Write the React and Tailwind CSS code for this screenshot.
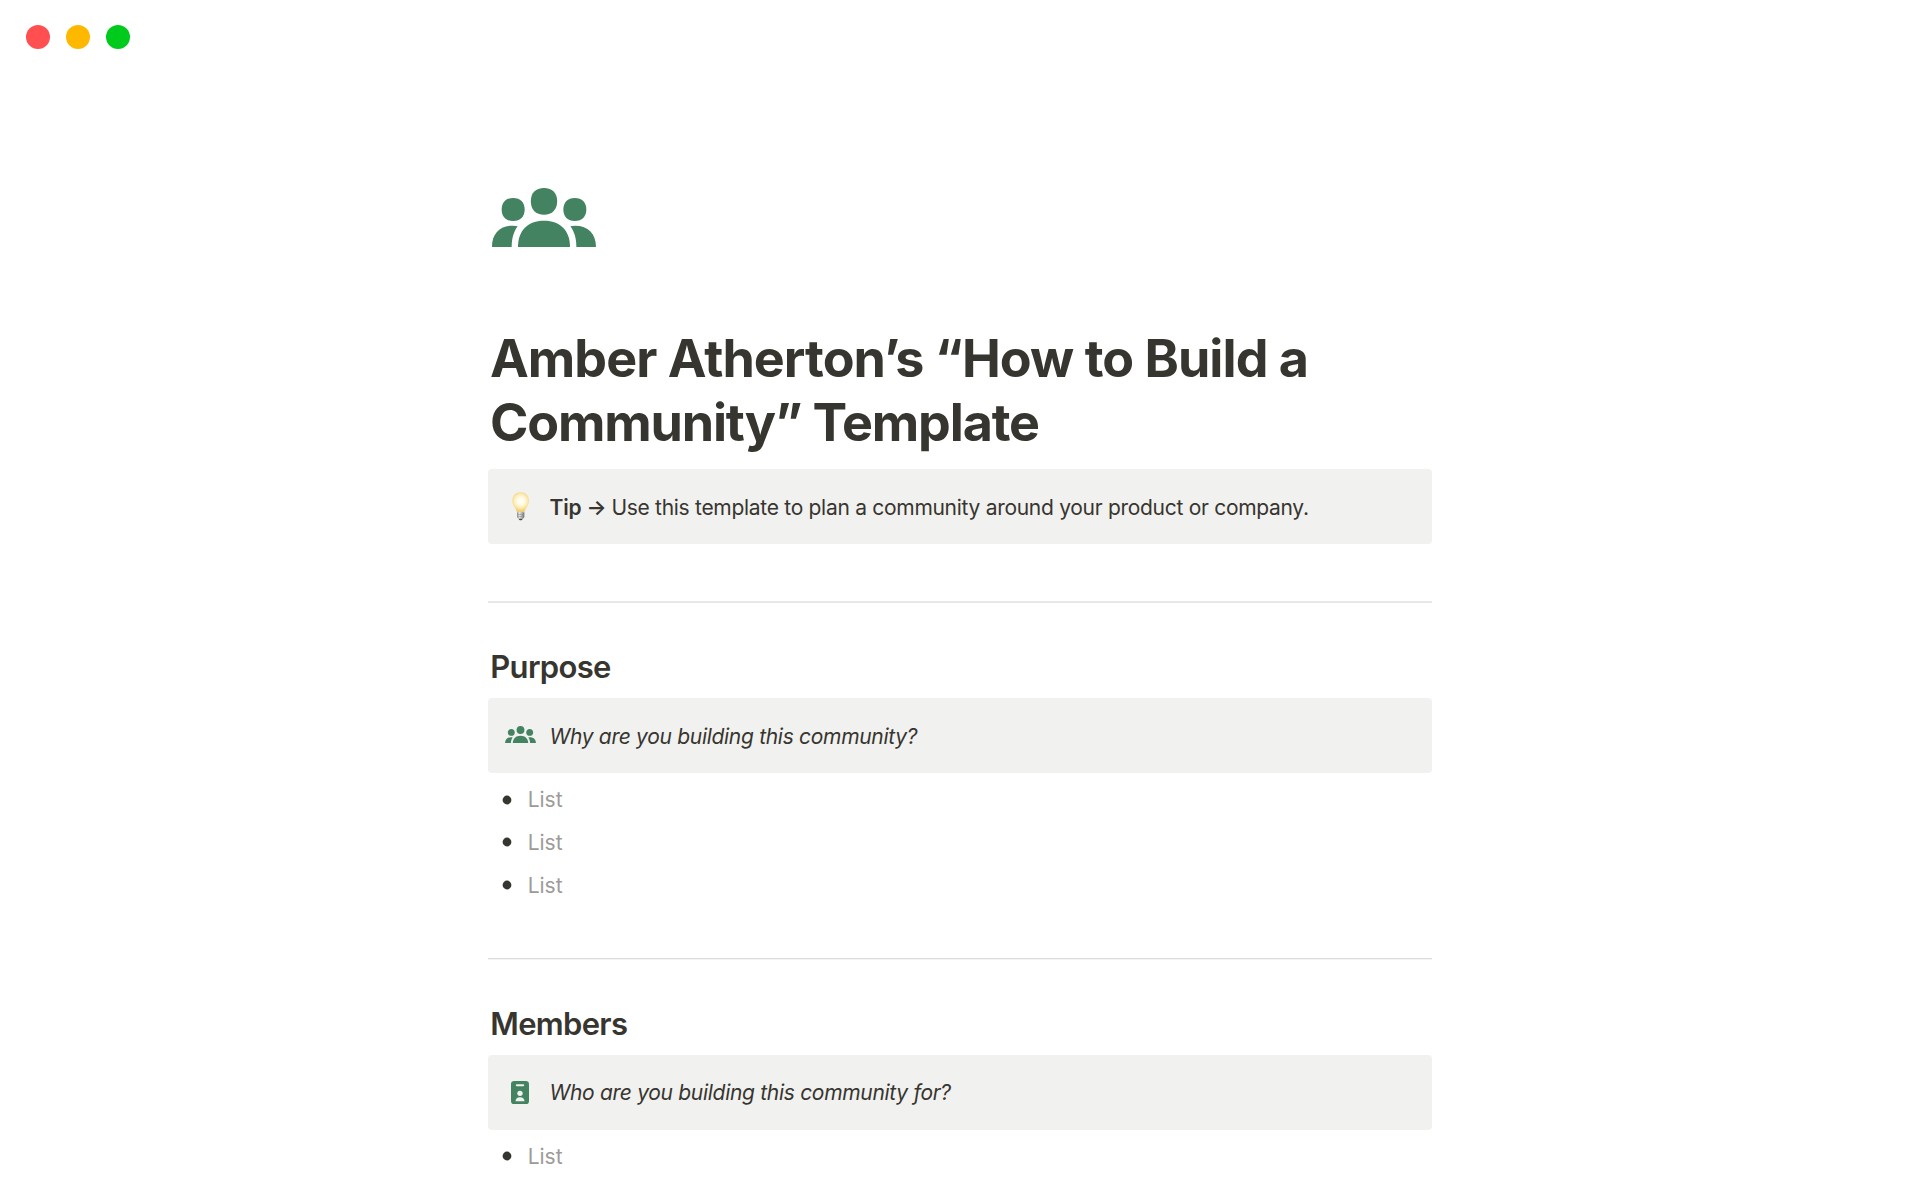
import React from 'react';

const SECTIONS = [
  {
    title: 'Purpose',
    question: 'Why are you building this community?',
    icon: 'people',
    items: 3,
    divider: 'border-t border-[#e8e8e7] bg-[#e8e8e7]',
  },
  {
    title: 'Members',
    question: 'Who are you building this community for?',
    icon: 'badge',
    items: 1,
    divider: 'border-t border-[#dcdcdb] bg-[#f4f4f3]',
  },
];

function PeopleIcon({ className }) {
  return (
    <svg viewBox="0 0 312 177" fill="#448361" className={className}>
      <path d="M156 0c25 0 39.500 15 39.500 39.500S181 80 156 80s-39.500-15.500-39.500-40.500S131 0 156 0Z" />
      <path d="M63.500 30C85 30 98 43 98 64.500S85 99 63.500 99 29 86 29 64.500 42 30 63.500 30Z" />
      <path d="M248.500 30C270 30 283 43 283 64.500S270 99 248.500 99 214 86 214 64.500 227 30 248.500 30Z" />
      <path d="M156 98c49 0 78 30 78 79H78c0-49 29-79 78-79Z" />
      <path d="M63 113c5 0 10 .5 14 1.500C65 131 59 150 59 177H0c0-40 23-64 63-64Z" />
      <path d="M249 113c-5 0-10 .5-14 1.500 12 16.500 18 35.500 18 62.500h59c0-40-23-64-63-64Z" />
    </svg>
  );
}

function BadgeIcon({ className }) {
  return (
    <svg viewBox="0 0 54 70" className={className}>
      <rect width="54" height="70" rx="10" fill="#448361" />
      <rect x="14.500" y="10" width="25" height="6" rx="3" fill="#f1f1ef" />
      <circle cx="27" cy="37" r="8" fill="#f1f1ef" />
      <path d="M13.500 61c0-8 5-12.500 13.500-12.500S40.500 53 40.500 61Z" fill="#f1f1ef" />
    </svg>
  );
}

function BulbIcon({ className }) {
  return (
    <svg viewBox="0 0 52 86" className={className}>
      <defs>
        <radialGradient id="bulb-glass" gradientUnits="userSpaceOnUse" cx="26" cy="27" r="30">
          <stop offset="0" stopColor="#fffffb" />
          <stop offset="0.35" stopColor="#fffbe6" />
          <stop offset="0.65" stopColor="#fdedb8" />
          <stop offset="0.85" stopColor="#f7dc90" />
          <stop offset="1" stopColor="#efcd7c" />
        </radialGradient>
        <linearGradient id="bulb-base" x1="0" x2="1">
          <stop offset="0" stopColor="#8d8d8b" />
          <stop offset="0.35" stopColor="#e4e4e2" />
          <stop offset="1" stopColor="#6e6e6d" />
        </linearGradient>
      </defs>
      <path d="M26 1c14.500 0 25 10.500 25 25 0 9-4 15-8 21-3.500 5-4.500 9-5.500 14h-23c-1-5-2-9-5.500-14C5 41 1 35 1 26 1 11.500 11.500 1 26 1Z" fill="url(#bulb-glass)" />
      <path d="M15 61h22v13c0 3-3 5-6 6H21c-3-1-6-3-6-6Z" fill="url(#bulb-base)" />
      <path d="M15 67.500h22M16 74h20" stroke="#8b8b89" strokeWidth="1.500" />
      <path d="M20 80h12c-1 3-3 5-6 5s-5-2-6-5Z" fill="#4a4a49" />
    </svg>
  );
}

function Bullet() {
  return (
    <svg viewBox="0 0 10 10" className="size-2.5 shrink-0">
      <circle cx="5" cy="5" r="4.400" fill="#37352f" />
    </svg>
  );
}

function Callout({ icon, children }) {
  return (
    <div className="flex h-[74.67px] items-center rounded-[4px] bg-[#f1f1ef] pl-4">
      <div className="flex w-8 shrink-0 items-center justify-center">
        {icon === 'bulb' && <BulbIcon className="ml-px h-[28.670px] w-[17.330px]" />}
        {icon === 'people' && <PeopleIcon className="h-[17.670px] w-[31px] -translate-y-px" />}
        {icon === 'badge' && <BadgeIcon className="h-[23.330px] w-[18px]" />}
      </div>
      <p className="ml-[13.500px] pt-[2.200px] text-[21px] leading-8 whitespace-nowrap">{children}</p>
    </div>
  );
}

function Section({ title, question, icon, items, divider }) {
  return (
    <section className="flex flex-col pb-[51.670px]">
      <div className={`h-0.5 ${divider}`} />
      <h2 className="mt-[42.660px] mb-[10.670px] pl-[2.330px] text-[31px] leading-[41.670px] font-semibold tracking-[-0.7px]">
        {title}
      </h2>
      <div className="tracking-[-0.3px] italic">
        <Callout icon={icon}>{question}</Callout>
      </div>
      <ul className="mt-[5.330px]">
        {Array.from({ length: items }).map((_, i) => (
          <li key={i} className="flex h-[42.670px] items-center pl-[13.670px]">
            <Bullet />
            <span className="ml-4 pt-[1.500px] text-[21px] leading-8 text-[#9c9b98]">List</span>
          </li>
        ))}
      </ul>
    </section>
  );
}

export default function App() {
  return (
    <div className="h-[1200px] overflow-hidden bg-white font-['Inter',sans-serif] text-[#37352f]">
      <header className="flex gap-4 pt-[25px] pl-[26px]">
        <span className="size-6 rounded-full bg-[#ff4f50]" />
        <span className="size-6 rounded-full bg-[#ffb800]" />
        <span className="size-6 rounded-full bg-[#00ca1b]" />
      </header>

      <main className="mx-auto w-[944px] pt-[139.330px]">
        <PeopleIcon className="ml-1 h-[59px] w-[104px]" />
        <h1 className="mt-[79.670px] pl-[2px] text-[52px] leading-16 font-bold tracking-[-0.960px] whitespace-nowrap">
          Amber Atherton’s “How to Build a
          <br />
          <span className="tracking-[-1.180px]">Community” Template</span>
        </h1>
        <div className="mt-[14.330px] mb-[57.330px]">
          <Callout icon="bulb">
            <span className="font-semibold tracking-[-0.2px]">Tip → </span>
            <span className="tracking-[-0.290px]">
              Use this template to plan a community around your product or company.
            </span>
          </Callout>
        </div>
        {SECTIONS.map((section) => (
          <Section key={section.title} {...section} />
        ))}
      </main>
    </div>
  );
}
